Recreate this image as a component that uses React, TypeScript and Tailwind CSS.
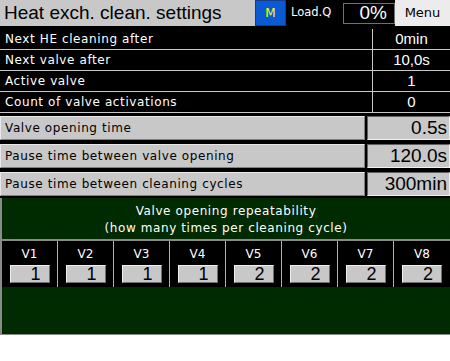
import React from 'react'

const font = { fontFamily: '"Liberation Sans", Arial, sans-serif' }
const small = { fontFamily: '"DejaVu Sans", Verdana, sans-serif' }

const statusRows = [
  { label: 'Next HE cleaning after', value: '0min' },
  { label: 'Next valve after', value: '10,0s' },
  { label: 'Active valve', value: '1' },
  { label: 'Count of valve activations', value: '0' },
]

const settingRows = [
  { label: 'Valve opening time', value: '0.5s' },
  { label: 'Pause time between valve opening', value: '120.0s' },
  { label: 'Pause time between cleaning cycles', value: '300min' },
]

const valves = [
  { name: 'V1', count: 1 },
  { name: 'V2', count: 1 },
  { name: 'V3', count: 1 },
  { name: 'V4', count: 1 },
  { name: 'V5', count: 2 },
  { name: 'V6', count: 2 },
  { name: 'V7', count: 2 },
  { name: 'V8', count: 2 },
]

const App: React.FC = () => {
  return (
    <div className="w-[450px] h-[361px] bg-white overflow-hidden" style={font}>
      {/* Header */}
      <div className="flex h-[27px] bg-black">
        <div className="w-[255px] h-[26px] bg-[#c8c8c8] pl-[4px] text-[19px] leading-[26px] text-black">
          Heat exch. clean. settings
        </div>
        <div
          className="w-[31px] h-[26px] bg-[#0a5ad2] border border-[#1a3a8a] flex items-center justify-center text-[12px] text-[#ffff00]"
          style={small}
        >
          M
        </div>
        <div className="flex-1 flex items-center h-[26px]">
          <span className="pl-[5px] w-[57px] text-[11.5px] text-white" style={small}>
            Load.Q
          </span>
          <div className="w-[52px] h-[21px] border border-[#707070] flex items-center justify-end pr-[7px] text-[19px] text-white">
            0%
          </div>
        </div>
        <div
          className="w-[55px] h-[26px] bg-[#ececec] flex items-center justify-center text-[13px] text-black"
          style={small}
        >
          Menu
        </div>
      </div>

      {/* Status rows */}
      <div className="bg-black pt-[2px]">
        {statusRows.map((row) => (
          <div key={row.label} className="flex h-[21px] border-b border-[#c8c8c8] text-white">
            <div className="flex-1 pl-[5px] text-[12px] leading-[20px] tracking-[0.6px]" style={small}>
              {row.label}
            </div>
            <div className="w-[78px] border-l border-[#c8c8c8] text-center text-[15px] leading-[20px]">
              {row.value}
            </div>
          </div>
        ))}
      </div>

      {/* Settings rows */}
      <div className="bg-black pt-[3px] pb-[2px] flex flex-col gap-[4px]">
        {settingRows.map((row) => (
          <div key={row.label} className="flex h-[24px] gap-[2px]">
            <div
              className="flex-1 bg-[#c8c8c8] border-t border-l border-[#e8e8e8] border-b border-r border-b-[#808080] border-r-[#808080] pl-[4px] text-[12px] leading-[22px] tracking-[0.6px] text-black"
              style={small}
            >
              {row.label}
            </div>
            <div className="w-[83px] bg-[#c8c8c8] border-t border-l border-[#606060] border-b border-r border-b-[#f0f0f0] border-r-[#f0f0f0] pr-[2px] text-right text-[19px] leading-[22px] text-black">
              {row.value}
            </div>
          </div>
        ))}
      </div>

      {/* Valve repeatability */}
      <div className="h-[137px] bg-[#002a00] border-l-2 border-b border-[#8a8a8a] flex flex-col">
        <div
          className="h-[43px] border-b-2 border-[#8a8a8a] flex flex-col items-center justify-center text-white text-[12px] leading-[17px] tracking-[0.6px] pt-[2px]"
          style={small}
        >
          <span>Valve opening repeatability</span>
          <span>(how many times per cleaning cycle)</span>
        </div>
        <div className="h-[46px] bg-black grid grid-cols-8">
          {valves.map((v, i) => (
            <div
              key={v.name}
              className={`flex flex-col items-center ${i < 7 ? 'border-r border-[#b0b0b0]' : ''}`}
            >
              <span className="text-white text-[12px] leading-[13px] mt-[7px]" style={small}>
                {v.name}
              </span>
              <div className="mt-[4px] w-[40px] h-[18px] bg-[#c8c8c8] border-t border-l border-[#f0f0f0] border-b border-r border-b-[#707070] border-r-[#707070] text-right pr-[8px] text-[18px] leading-[16px] text-black">
                {v.count}
              </div>
            </div>
          ))}
        </div>
        <div className="flex-1" />
      </div>
    </div>
  )
}

export default App
